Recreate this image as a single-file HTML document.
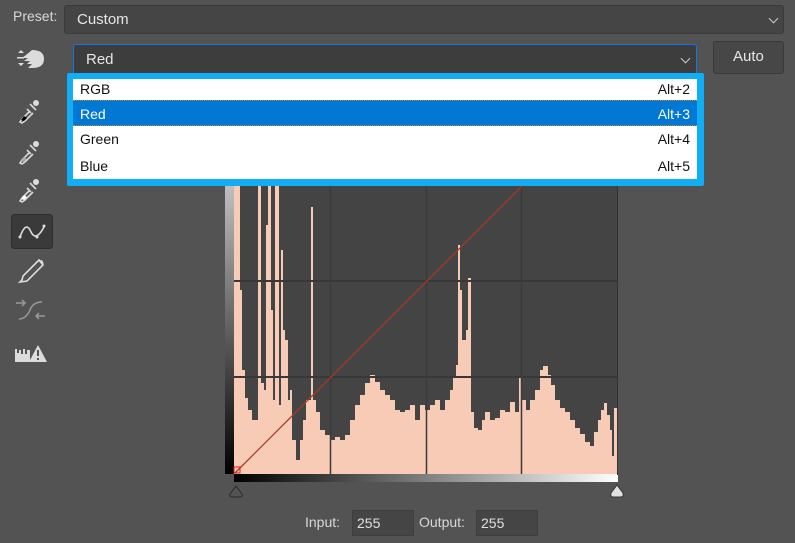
<!DOCTYPE html>
<html><head><meta charset="utf-8"><style>
*{margin:0;padding:0;box-sizing:border-box}
body{width:795px;height:543px;background:#535353;font-family:"Liberation Sans",Arial,sans-serif;position:relative;overflow:hidden;color:#ddd}
.abs{position:absolute}
.lbl{font-size:14px;color:#d8d8d8}
.sel{background:#454545;border:1px solid #3a3a3a;border-radius:3px}
.chev{position:absolute;width:7px;height:7px;border-right:1px solid #ccc;border-bottom:1px solid #ccc;transform:rotate(45deg)}
.row{position:absolute;left:0;right:0;height:26px;font-size:14px;color:#111;line-height:22px;padding:0 7px}
.row span{float:right}
.inp{background:#454545;border:1px solid #3e3e3e;font-size:14px;color:#e0e0e0;padding:2px 4px;height:26px;line-height:20px}
</style></head><body>
<div class="abs lbl" style="left:13px;top:8px">Preset:</div>
<div class="abs sel" style="left:64px;top:5px;width:720px;height:29px"><div class="abs" style="left:12px;top:5px;font-size:15px;color:#e6e6e6">Custom</div><div class="chev" style="left:705px;top:9px"></div></div>

<div class="abs" style="left:73px;top:44px;width:624px;height:30px;background:#3d3d3d;border:1px solid #1473e6;border-bottom:none;border-radius:3px 3px 0 0"><div class="abs" style="left:12px;top:6px;font-size:15px;color:#e6e6e6">Red</div><div class="chev" style="left:608px;top:10px"></div></div>
<div class="abs sel" style="left:713px;top:41px;width:71px;height:33px;background:#474747"><div class="abs" style="left:19px;top:6px;font-size:15px;color:#e6e6e6">Auto</div></div>

<!-- graph -->
<svg class="abs" style="left:0;top:0" width="795" height="543">
<defs>
<linearGradient id="gv" x1="0" y1="1" x2="0" y2="0"><stop offset="0" stop-color="#000"/><stop offset="1" stop-color="#fff"/></linearGradient>
<linearGradient id="gh" x1="0" y1="0" x2="1" y2="0"><stop offset="0" stop-color="#000"/><stop offset="1" stop-color="#fff"/></linearGradient>
</defs>
<rect x="225" y="90" width="9" height="384" fill="url(#gv)"/>
<rect x="234" y="474" width="384" height="8" fill="url(#gh)"/>
<rect x="234" y="90" width="383" height="384" fill="#444"/>
<polygon fill="#f8cbb6" points="234,474 234,90 240,90 240,290 242,290 242,370 245,370 245,398 248,398 248,410 252,410 252,420 258,420 258,90 261,90 261,383 264,383 264,390 266,390 266,225 268,225 268,90 271,90 271,310 273,310 273,400 275,400 275,90 279,90 279,405 281,405 281,250 283,250 283,330 285,330 285,340 288,340 288,400 290,400 290,390 292,390 292,440 296,440 296,460 300,460 300,440 303,440 303,420 306,420 306,400 311,400 311,207 313,207 313,400 316,400 316,412 320,412 320,430 325,430 325,435 330,435 330,440 335,440 335,437 340,437 340,440 345,440 345,435 350,435 350,420 355,420 355,405 360,405 360,395 365,395 365,383 370,383 370,375 375,375 375,382 380,382 380,390 385,390 385,395 390,395 390,400 395,400 395,410 400,410 400,412 405,412 405,410 410,410 410,405 415,405 415,420 420,420 420,405 425,405 425,410 430,410 430,405 435,405 435,400 440,400 440,410 445,410 445,400 450,400 450,390 453,390 453,378 456,378 456,365 458,365 458,245 460,245 460,290 462,290 462,340 466,340 466,330 468,330 468,278 471,278 471,412 474,412 474,428 478,428 478,430 482,430 482,420 485,420 485,412 490,412 490,420 495,420 495,418 500,418 500,410 505,410 505,412 510,412 510,402 515,402 515,412 519,412 519,377 522,377 522,400 526,400 526,410 530,410 530,400 535,400 535,390 540,390 540,370 543,370 543,366 548,366 548,375 551,375 551,385 555,385 555,400 560,400 560,408 565,408 565,412 570,412 570,420 575,420 575,428 580,428 580,434 585,434 585,442 590,442 590,446 594,446 594,432 598,432 598,420 601,420 601,410 604,410 604,403 607,403 607,415 610,415 610,430 612,430 612,456 614,456 614,408 617,408 617,474"/>
<g stroke="#383838" stroke-width="2">
<line x1="234" y1="185" x2="617" y2="185"/><line x1="234" y1="281" x2="617" y2="281"/><line x1="234" y1="377" x2="617" y2="377"/>
</g>
<g stroke="#3a3a3a" stroke-width="1.5"><line x1="330.5" y1="90" x2="330.5" y2="474"/><line x1="426.5" y1="90" x2="426.5" y2="474"/><line x1="521.5" y1="90" x2="521.5" y2="474"/></g>
<line x1="617.5" y1="90" x2="617.5" y2="475" stroke="#333" stroke-width="1"/>
<line x1="235" y1="473" x2="617" y2="91" stroke="#a33a25" stroke-width="1.3"/>
<rect x="234" y="467" width="6" height="6" fill="none" stroke="#e02010" stroke-width="1"/>
<path d="M236 486 L230 494 Q229 497 232 497 L240 497 Q243 497 242 494 Z" fill="none" stroke="#2a2a2a" stroke-width="1"/>
<path d="M617 485 L611 493 Q610 497 613 497 L621 497 Q624 497 623 493 Z" fill="#e0e0e0" stroke="#333" stroke-width="1"/>

<!-- tool icons -->
<g fill="#dcdcdc">
<path d="M32 50 Q44 50 44 59 Q44 68 32 68 L28 68 L32 64 L27 64 L30 61 L24 61 L28 58 L22 58 L26 55 Z"/>
<path d="M18 53 L21 50 L24 53 Z M18 63 L24 63 L21 66 Z M17 57 h7 v1.5 h-7 Z"/>
</g>
<g stroke="#d8d8d8" stroke-width="1.6" fill="none">
<path d="M30 104 l6 6 M27 109 l4 4 M22 119 l8 -8 M22 119 l-2 3 l2 1 l3 -2 l8 -8"/>
<path d="M30 145 l6 6 M27 150 l4 4 M22 160 l8 -8 M22 160 l-2 3 l2 1 l3 -2 l8 -8"/>
<path d="M30 183 l6 6 M27 188 l4 4 M22 198 l8 -8 M22 198 l-2 3 l2 1 l3 -2 l8 -8"/>
</g>
<g fill="#dcdcdc"><circle cx="36" cy="103" r="3"/><circle cx="36" cy="144" r="3"/><circle cx="36" cy="182" r="3"/></g>
<path d="M21 120 l3 -4 l3 2 l-3 3 z" fill="#000"/>
<path d="M21 161 l3 -4 l3 2 l-3 3 z" fill="#aaa"/>
<path d="M21 199 l3 -4 l3 2 l-3 3 z" fill="#fff"/>
<rect x="11.5" y="214.5" width="41" height="34" rx="3" fill="#3a3a3a" stroke="#2e2e2e"/>
<path d="M20 237 Q26 220 31 232 Q36 242 44 227" stroke="#dcdcdc" stroke-width="1.6" fill="none"/>
<g fill="#dcdcdc"><circle cx="20" cy="237" r="1.5"/><circle cx="37" cy="237" r="1.5"/><circle cx="44" cy="226" r="1.5"/></g>
<path d="M22 280 L20 282 L27 281 L43 265 L39 260 L23 276 Z" stroke="#dcdcdc" stroke-width="1.6" fill="none"/>
<path d="M38 261 l4 -1 l2 4" fill="#dcdcdc"/>
<g stroke="#9a9a9a" stroke-width="1.5" fill="none">
<path d="M19 319 Q26 319 30 310 Q33 302 42 302"/><path d="M16 303 h9 M22 300 l3 3 l-3 3 M45 316 h-9 M39 313 l-3 3 l3 3"/>
</g>
<path d="M15 362 v-13 h2 v4 h2 v-3 h2 v4 h2 v-5 h2 v5 h2 v-4 h3 v12 Z" fill="#dcdcdc"/>
<path d="M38 345 L47 362 L29 362 Z" fill="#dcdcdc"/>
<rect x="37" y="350" width="2" height="6" fill="#535353"/><rect x="37" y="358" width="2" height="2" fill="#535353"/>
</svg>

<!-- dropdown popup -->
<div class="abs" style="left:67px;top:73px;width:637px;height:113px;background:#12aef5;border-radius:2px"></div>
<div class="abs" style="left:73px;top:79px;width:624px;height:100px;background:#fff">
<div class="row" style="top:0;height:21px;line-height:20px">RGB<span>Alt+2</span></div>
<div class="row" style="top:21px;background:#0078d4;color:#fff;line-height:26px;border-top:1px dotted #c08040;border-bottom:1px dotted #c08040">Red<span>Alt+3</span></div>
<div class="row" style="top:47px;line-height:26px">Green<span>Alt+4</span></div>
<div class="row" style="top:74px;line-height:26px">Blue<span>Alt+5</span></div>
</div>

<div class="abs lbl" style="left:305px;top:514px">Input:</div>
<div class="abs inp" style="left:352px;top:510px;width:62px">255</div>
<div class="abs lbl" style="left:419px;top:514px">Output:</div>
<div class="abs inp" style="left:476px;top:510px;width:62px">255</div>
</body></html>
